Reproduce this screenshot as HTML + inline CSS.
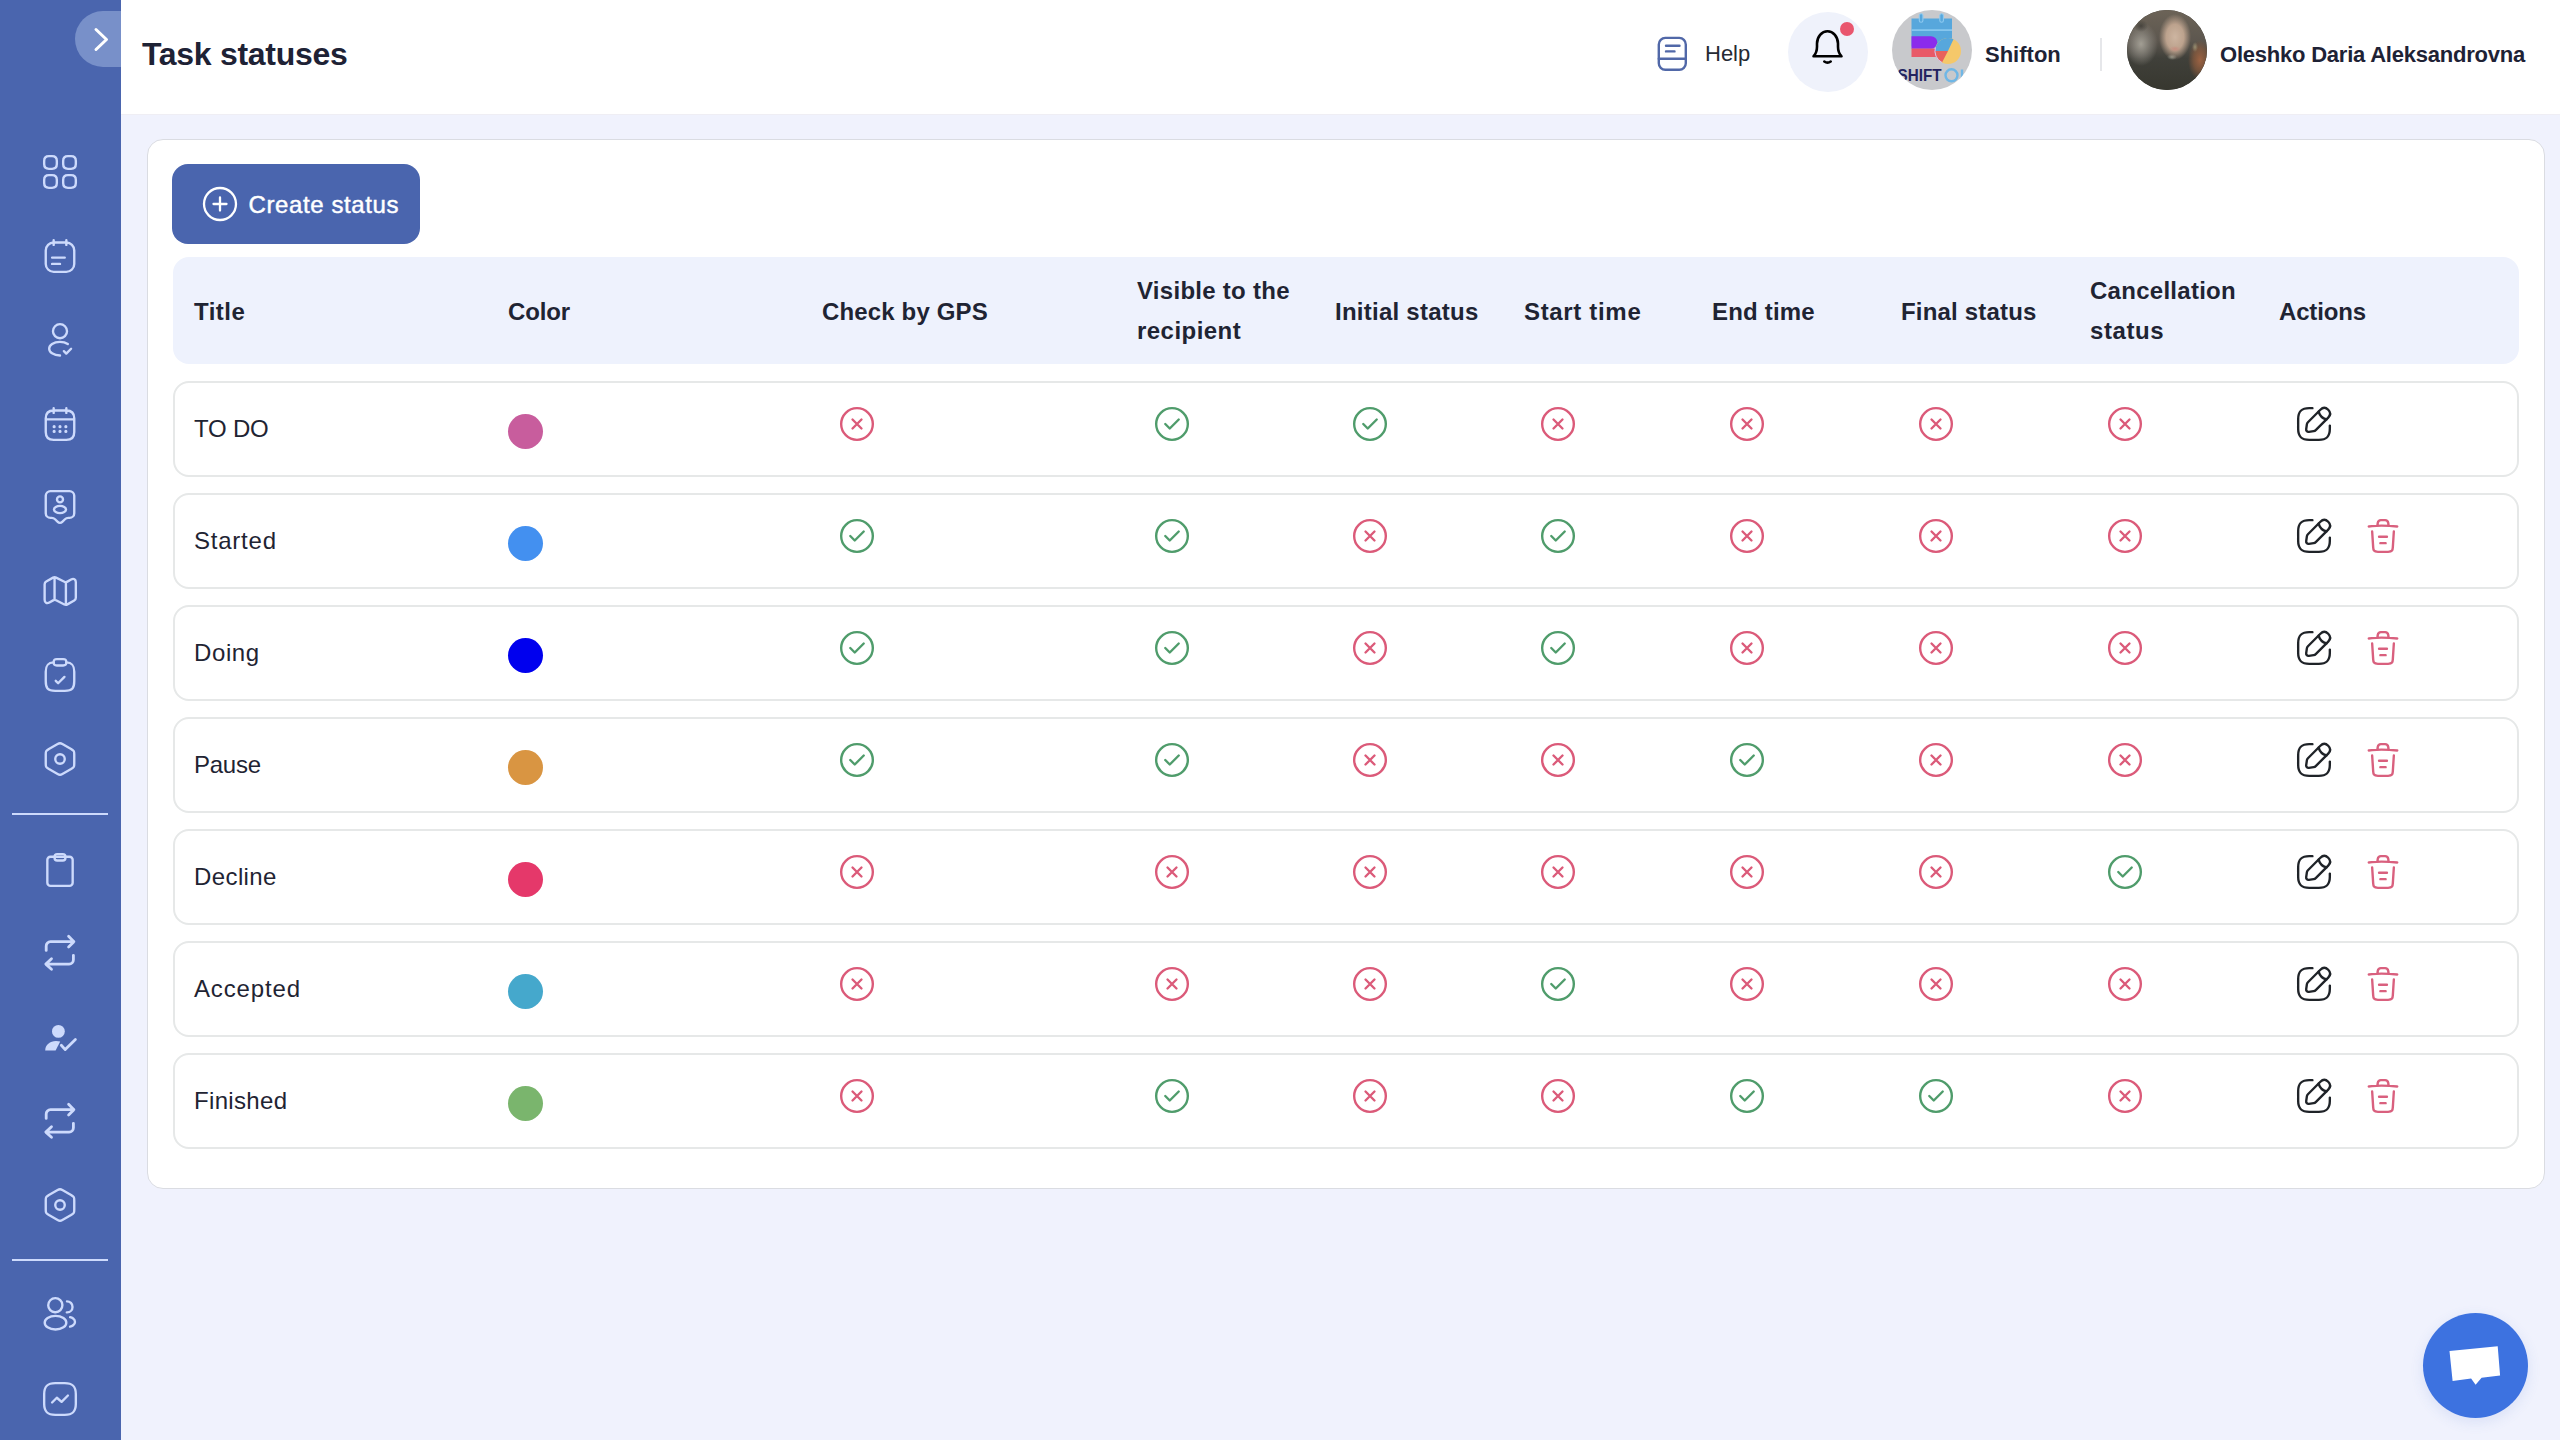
<!DOCTYPE html>
<html><head><meta charset="utf-8"><title>Task statuses</title>
<style>
html,body{margin:0;padding:0;}
body{width:2560px;height:1440px;position:relative;overflow:hidden;background:#f0f2fd;font-family:"Liberation Sans", sans-serif;}
.t{position:absolute;white-space:nowrap;}
.i{position:absolute;overflow:visible;}
</style></head><body>
<div style="position:absolute;left:0;top:0;width:121px;height:1440px;background:#4a65ae"></div>
<div style="position:absolute;left:75px;top:11px;width:46px;height:56px;border-radius:28px 0 0 28px;background:#7890c9"></div>
<svg class="i" style="left:85px;top:21px" width="32" height="36" viewBox="0 0 32 36" fill="none" stroke="#fff" stroke-width="3" stroke-linecap="round" stroke-linejoin="round"><path d="M11 8.5l10.5 10-10.5 10"/></svg>
<svg class="i" style="left:40.50px;top:153.00px;" width="38" height="38" viewBox="0 0 24 24" fill="none" stroke="#cddafc" stroke-width="1.5" stroke-linecap="round" stroke-linejoin="round"><path d="M5 10h2c2 0 3-1 3-3V5c0-2-1-3-3-3H5C3 2 2 3 2 5v2c0 2 1 3 3 3zM17 10h2c2 0 3-1 3-3V5c0-2-1-3-3-3h-2c-2 0-3 1-3 3v2c0 2 1 3 3 3zM17 22h2c2 0 3-1 3-3v-2c0-2-1-3-3-3h-2c-2 0-3 1-3 3v2c0 2 1 3 3 3zM5 22h2c2 0 3-1 3-3v-2c0-2-1-3-3-3H5c-2 0-3 1-3 3v2c0 2 1 3 3 3z"/></svg>
<svg class="i" style="left:40.50px;top:237.00px;" width="38" height="38" viewBox="0 0 24 24" fill="none" stroke="#cddafc" stroke-width="1.5" stroke-linecap="round" stroke-linejoin="round"><path d="M8 2v3M16 2v3M7 13h8M7 17h5"/><rect x="3" y="3.5" width="18" height="18.5" rx="5"/></svg>
<svg class="i" style="left:40.50px;top:320.60px;" width="38" height="38" viewBox="0 0 24 24" fill="none" stroke="#cddafc" stroke-width="1.5" stroke-linecap="round" stroke-linejoin="round"><path d="M14.44 19.05l1.52 1.52 3.04-3.04M12 10.87a4.43 4.43 0 1 0 0-8.87 4.43 4.43 0 0 0 0 8.87zM12 21.81c-1.82 0-3.630-.46-5.01-1.38-2.42-1.62-2.42-4.26 0-5.87 2.73-1.83 7.22-1.83 9.95 0"/></svg>
<svg class="i" style="left:40.50px;top:404.70px;" width="38" height="38" viewBox="0 0 24 24" fill="none" stroke="#cddafc" stroke-width="1.5" stroke-linecap="round" stroke-linejoin="round"><path d="M8 2v3M16 2v3M3.5 9.09h17M21 8.5V17c0 3-1.5 5-5 5H8c-3.5 0-5-2-5-5V8.5c0-3 1.5-5 5-5h8c3.5 0 5 2 5 5z"/><path stroke-width="2" d="M15.695 13.7h.009M15.695 16.7h.009M11.995 13.7h.009M11.995 16.7h.009M8.294 13.7h.01M8.294 16.7h.01"/></svg>
<svg class="i" style="left:40.50px;top:488.30px;" width="38" height="38" viewBox="0 0 24 24" fill="none" stroke="#cddafc" stroke-width="1.5" stroke-linecap="round" stroke-linejoin="round"><path d="M18 18.86h-.76c-.8 0-1.56.31-2.12.87l-1.71 1.69c-.78.77-2.05.77-2.83 0l-1.71-1.69c-.56-.56-1.33-.87-2.12-.87H6c-1.66 0-3-1.33-3-2.97V4.97C3 3.33 4.34 2 6 2h12c1.66 0 3 1.33 3 2.97v10.91c0 1.63-1.34 2.98-3 2.98z"/><circle cx="12" cy="7.2" r="1.9"/><ellipse cx="12" cy="13.6" rx="3.8" ry="2.3"/></svg>
<svg class="i" style="left:40.50px;top:572.40px;" width="38" height="38" viewBox="0 0 24 24" fill="none" stroke="#cddafc" stroke-width="1.5" stroke-linecap="round" stroke-linejoin="round"><path d="M2.29 7.78v9.73c0 1.9 1.35 2.68 2.99 1.74l2.35-1.34c.51-.29 1.36-.32 1.89-.05l5.25 2.63c.53.26 1.38.24 1.89-.05l4.33-2.48c.55-.32 1.01-1.1 1.01-1.74V6.49c0-1.9-1.35-2.68-2.99-1.74l-2.35 1.34c-.51.29-1.36.32-1.89.05L9.52 3.52c-.53-.26-1.38-.24-1.89.05L3.3 6.05c-.56.32-1.01 1.1-1.01 1.73zM8.56 4v13M15.73 6.62V20"/></svg>
<svg class="i" style="left:40.50px;top:656.00px;" width="38" height="38" viewBox="0 0 24 24" fill="none" stroke="#cddafc" stroke-width="1.5" stroke-linecap="round" stroke-linejoin="round"><path d="M9.31 15.7l1.5 1.5 4-4M10 6h4c2 0 2-1 2-2 0-2-1-2-2-2h-4C9 2 8 2 8 4s1 2 2 2z"/><path d="M16 4.02c3.33.18 5 1.41 5 5.98v6c0 4-1 6-6 6H9c-5 0-6-2-6-6v-6c0-4.56 1.67-5.8 5-5.98"/></svg>
<svg class="i" style="left:40.50px;top:740.00px;" width="38" height="38" viewBox="0 0 24 24" fill="none" stroke="#cddafc" stroke-width="1.5" stroke-linecap="round" stroke-linejoin="round"><path d="M3 9.11v5.77C3 17 3 17 5 18.35l5.5 3.18c.83.48 2.18.48 3 0l5.5-3.18c2-1.35 2-1.35 2-3.46V9.11C21 7 21 7 19 5.65l-5.5-3.18c-.82-.48-2.17-.48-3 0L5 5.65C3 7 3 7 3 9.11z"/><path d="M12 15a3 3 0 100-6 3 3 0 000 6z"/></svg>
<svg class="i" style="left:40.50px;top:851.00px;" width="38" height="38" viewBox="0 0 24 24" fill="none" stroke="#cddafc" stroke-width="1.5" stroke-linecap="round" stroke-linejoin="round"><rect x="4" y="3.6" width="16" height="18.4" rx="2"/><rect x="8.6" y="2" width="6.8" height="4" rx="1.6"/></svg>
<svg class="i" style="left:40.50px;top:934.20px;" width="38" height="38" viewBox="0 0 38 38" fill="none" stroke="#cddafc" stroke-width="2.8" stroke-linecap="round" stroke-linejoin="round"><path d="M5.2 16.4V12a4.3 4.3 0 0 1 4.3-4.3H32.9M27.6 2.3l5.3 5.4-5.3 5.3M32.4 21.3v4.5a4.3 4.3 0 0 1-4.3 4.3H4.8M10.5 24.8l-5.7 5.3 5.7 5.2"/></svg>
<svg class="i" style="left:40.50px;top:1019.00px;" width="38" height="38" viewBox="0 0 38 38" fill="none" stroke="#cddafc" stroke-width="2.8" stroke-linecap="round" stroke-linejoin="round"><circle cx="17.4" cy="12.4" r="6.4" fill="#cddafc" stroke="none"/><path d="M4.2 31.4C4.2 26 9 22.1 15 22.1c1.6 0 3 .2 4.2.5L14.6 31.4z" fill="#cddafc" stroke="none"/><path d="M20.3 26.3l3.9 4.3 10.2-10"/></svg>
<svg class="i" style="left:40.50px;top:1102.00px;" width="38" height="38" viewBox="0 0 38 38" fill="none" stroke="#cddafc" stroke-width="2.8" stroke-linecap="round" stroke-linejoin="round"><path d="M5.2 16.4V12a4.3 4.3 0 0 1 4.3-4.3H32.9M27.6 2.3l5.3 5.4-5.3 5.3M32.4 21.3v4.5a4.3 4.3 0 0 1-4.3 4.3H4.8M10.5 24.8l-5.7 5.3 5.7 5.2"/></svg>
<svg class="i" style="left:40.50px;top:1186.00px;" width="38" height="38" viewBox="0 0 24 24" fill="none" stroke="#cddafc" stroke-width="1.5" stroke-linecap="round" stroke-linejoin="round"><path d="M3 9.11v5.77C3 17 3 17 5 18.35l5.5 3.18c.83.48 2.18.48 3 0l5.5-3.18c2-1.35 2-1.35 2-3.46V9.11C21 7 21 7 19 5.65l-5.5-3.18c-.82-.48-2.17-.48-3 0L5 5.65C3 7 3 7 3 9.11z"/><path d="M12 15a3 3 0 100-6 3 3 0 000 6z"/></svg>
<svg class="i" style="left:40.50px;top:1295.40px;" width="38" height="38" viewBox="0 0 24 24" fill="none" stroke="#cddafc" stroke-width="1.5" stroke-linecap="round" stroke-linejoin="round"><path d="M9.16 10.87c-.1-.01-.22-.01-.33 0a4.42 4.42 0 01-4.27-4.43C4.56 3.990 6.54 2 9 2a4.435 4.435 0 01.16 8.87zM16.41 4c1.94 0 3.5 1.57 3.5 3.5 0 1.89-1.5 3.43-3.37 3.5a1.13 1.13 0 00-.26 0M4.16 14.56c-2.42 1.62-2.42 4.26 0 5.87 2.75 1.84 7.26 1.84 10.01 0 2.42-1.62 2.42-4.26 0-5.87-2.74-1.83-7.25-1.83-10.01 0zM18.34 20c.72-.15 1.4-.44 1.96-.87 1.56-1.17 1.56-3.1 0-4.27-.55-.42-1.22-.7-1.930-.86"/></svg>
<svg class="i" style="left:40.50px;top:1379.80px;" width="38" height="38" viewBox="0 0 24 24" fill="none" stroke="#cddafc" stroke-width="1.5" stroke-linecap="round" stroke-linejoin="round"><path d="M9 22h6c5 0 7-2 7-7V9c0-5-2-7-7-7H9C4 2 2 4 2 9v6c0 5 2 7 7 7z"/><path d="M7 14.2l3-3 3 2.6 4-4"/></svg>
<div style="position:absolute;left:12px;top:813px;width:96px;height:2px;background:#cddafc"></div>
<div style="position:absolute;left:12px;top:1259px;width:96px;height:2px;background:#cddafc"></div>
<div style="position:absolute;left:121px;top:0;width:2439px;height:114px;background:#fff;border-bottom:1px solid #efeef4"></div>
<div class="t" style="left:142px;top:32.31px;font-size:32px;line-height:44px;font-weight:bold;color:#1e2235;letter-spacing:-0.3px">Task statuses</div>
<svg class="i" style="left:1654px;top:34px" width="38" height="38" viewBox="0 0 38 38" fill="none" stroke="#5168a8" stroke-width="2.4" stroke-linecap="round" stroke-linejoin="round"><rect x="4.8" y="3.9" width="27" height="31.8" rx="6.5"/><path d="M4.8 24.7h27M12 11.8h13.5M12 17.4h8.5"/></svg>
<div class="t" style="left:1705px;top:39.08px;font-size:22px;line-height:30px;font-weight:normal;color:#262a33;">Help</div>
<div style="position:absolute;left:1788px;top:12px;width:80px;height:80px;border-radius:50%;background:#eff2fb"></div>
<svg class="i" style="left:1808px;top:26px" width="40" height="44" viewBox="0 0 40 44" fill="none" stroke="#000" stroke-width="2.6" stroke-linecap="round" stroke-linejoin="round"><path d="M5.5 30.3c1.5-1.6 3.5-3.6 3.5-9.5v-3.2c0-6.800 4.8-12.4 10.5-12.4s10.5 5.6 10.5 12.4v3.2c0 5.9 2 7.9 3.5 9.5z"/><path d="M16.3 35.5c1.8 1.3 4.600 1.3 6.400 0"/></svg>
<div style="position:absolute;left:1839.7px;top:21.8px;width:14px;height:14px;border-radius:50%;background:#e9566e"></div>
<div style="position:absolute;left:1892px;top:10px;width:80px;height:80px;border-radius:50%;background:#c8c9cc;overflow:hidden">
<svg width="80" height="80" viewBox="0 0 80 80" style="position:absolute;left:0;top:0">
<rect x="19.5" y="8.5" width="40.5" height="28" fill="#57a7dc"/>
<rect x="19.5" y="19.2" width="40.5" height="1.8" fill="#86c6ee"/>
<rect x="27.3" y="3.8" width="3.6" height="8.4" rx="1.8" fill="#57a7dc" stroke="#8fcaf0" stroke-width="1.1"/>
<rect x="47.8" y="3.8" width="3.6" height="8.4" rx="1.8" fill="#57a7dc" stroke="#8fcaf0" stroke-width="1.1"/>
<path d="M19.5 26.2H39a6.3 6.3 0 0 1 0 12.6H19.5Z" fill="#8b2bec"/>
<rect x="19.5" y="38.6" width="28" height="8.4" fill="#e85a68"/>
<circle cx="56" cy="41" r="13" fill="#f5c86a"/>
<path d="M56 41L43 41A13 13 0 0 1 61.5 29.2Z" fill="#57a7dc"/>
<path d="M56 41L43 41A13 13 0 0 0 50 52.5Z" fill="#e8625c"/>
<path d="M43.4 37.5A13 13 0 0 0 50 52.5" fill="none" stroke="#d8c6f2" stroke-width="1"/>
<text x="5.5" y="71.3" font-family="Liberation Sans" font-weight="bold" font-size="16.5" fill="#23235f" textLength="44" lengthAdjust="spacingAndGlyphs">SHIFT</text>
<circle cx="59.5" cy="65.3" r="6" fill="none" stroke="#6fb7e6" stroke-width="2.4"/>
<path d="M70 59.5v12" stroke="#6fb7e6" stroke-width="2.4"/>
</svg></div>
<div class="t" style="left:1985px;top:39.58px;font-size:22px;line-height:30px;font-weight:bold;color:#1e2235;">Shifton</div>
<div style="position:absolute;left:2099.5px;top:37.5px;width:2px;height:33px;background:#e6e7ea"></div>
<div style="position:absolute;left:2127px;top:9.5px;width:80px;height:80px;border-radius:50%;overflow:hidden;background:#3a3a33">
<div style="position:absolute;left:0;top:0;width:80px;height:80px;background:
radial-gradient(ellipse 6px 3px at 48px 39px, #c68e80 0%, rgba(198,142,128,0) 100%),
radial-gradient(ellipse 16px 23px at 48px 27px, #cdb5a1 0%, #bca28d 55%, rgba(140,120,100,0) 100%),
radial-gradient(ellipse 5px 3px at 45px 47px, rgba(190,195,180,0.6) 0%, rgba(200,205,190,0) 100%),
radial-gradient(ellipse 3px 5px at 68px 37px, rgba(190,190,150,0.55) 0%, rgba(200,200,160,0) 100%),
radial-gradient(ellipse 12px 20px at 73px 50px, #9c6242 0%, rgba(150,95,62,0.6) 55%, rgba(0,0,0,0) 100%),
radial-gradient(ellipse 7px 6px at 14px 16px, rgba(53,51,46,0.7) 0%, rgba(50,48,44,0) 100%),
radial-gradient(ellipse 17px 22px at 14px 34px, #a29e94 0%, rgba(140,136,128,0.6) 55%, rgba(0,0,0,0) 100%),
linear-gradient(180deg, #6c6357 0%, #5d574f 38%, #40403a 60%, #37372f 100%)"></div>
</div>
<div class="t" style="left:2220px;top:39.58px;font-size:22px;line-height:30px;font-weight:bold;color:#1e2235;letter-spacing:-0.22px">Oleshko Daria Aleksandrovna</div>
<div style="position:absolute;left:147px;top:139px;width:2396px;height:1048px;background:#fff;border:1px solid #dadce2;border-radius:16px"></div>
<div style="position:absolute;left:172px;top:164px;width:248px;height:80px;border-radius:16px;background:#4a65ae"></div>
<svg class="i" style="left:201px;top:185px" width="38" height="38" viewBox="0 0 38 38" fill="none" stroke="#fff" stroke-width="2.3" stroke-linecap="round"><circle cx="19" cy="19" r="16"/><path d="M19 12.5v13M12.5 19h13"/></svg>
<div class="t" style="left:248.5px;top:185.43px;font-size:24px;line-height:40px;font-weight:normal;color:#fff;letter-spacing:0.6px;-webkit-text-stroke:0.45px #fff">Create status</div>
<div style="position:absolute;left:173px;top:257px;width:2346px;height:107px;border-radius:16px;background:#eef2fd"></div>
<div class="t" style="left:194px;top:291.98px;font-size:24px;line-height:40px;font-weight:bold;color:#1f2433;letter-spacing:0.47px">Title</div>
<div class="t" style="left:508px;top:291.98px;font-size:24px;line-height:40px;font-weight:bold;color:#1f2433;letter-spacing:-0.15px">Color</div>
<div class="t" style="left:822px;top:291.98px;font-size:24px;line-height:40px;font-weight:bold;color:#1f2433;letter-spacing:0.15px">Check by GPS</div>
<div class="t" style="left:1137px;top:271.08px;font-size:24px;line-height:40px;font-weight:bold;color:#1f2433;letter-spacing:0.28px">Visible to the</div>
<div class="t" style="left:1137px;top:311.18px;font-size:24px;line-height:40px;font-weight:bold;color:#1f2433;letter-spacing:0.46px">recipient</div>
<div class="t" style="left:1335px;top:291.98px;font-size:24px;line-height:40px;font-weight:bold;color:#1f2433;letter-spacing:0.25px">Initial status</div>
<div class="t" style="left:1524px;top:291.98px;font-size:24px;line-height:40px;font-weight:bold;color:#1f2433;letter-spacing:0.67px">Start time</div>
<div class="t" style="left:1712px;top:291.98px;font-size:24px;line-height:40px;font-weight:bold;color:#1f2433;letter-spacing:0.19px">End time</div>
<div class="t" style="left:1901px;top:291.98px;font-size:24px;line-height:40px;font-weight:bold;color:#1f2433;letter-spacing:0.18px">Final status</div>
<div class="t" style="left:2090px;top:271.08px;font-size:24px;line-height:40px;font-weight:bold;color:#1f2433;letter-spacing:0.27px">Cancellation</div>
<div class="t" style="left:2090px;top:311.18px;font-size:24px;line-height:40px;font-weight:bold;color:#1f2433;letter-spacing:0.6px">status</div>
<div class="t" style="left:2279px;top:291.98px;font-size:24px;line-height:40px;font-weight:bold;color:#1f2433;letter-spacing:-0.17px">Actions</div>
<div style="position:absolute;left:173px;top:381px;width:2342px;height:92px;border:2px solid #e6e8e8;border-radius:16px;background:#fff"></div>
<div class="t" style="left:194px;top:408.88px;font-size:24px;line-height:40px;font-weight:normal;color:#1f2433;letter-spacing:-0.2px">TO DO</div>
<div style="position:absolute;left:507.5px;top:413.55px;width:35.5px;height:35.5px;border-radius:50%;background:#c85d9d"></div>
<svg class="i" style="left:838.30px;top:405.40px;" width="38" height="38" viewBox="0 0 24 24" fill="none" stroke="#db5a79" stroke-width="1.5" stroke-linecap="round" stroke-linejoin="round"><circle cx="12" cy="12" r="10"/><path d="M9.17 14.83l5.66-5.66M14.83 14.83L9.17 9.17"/></svg>
<svg class="i" style="left:1153.10px;top:405.40px;" width="38" height="38" viewBox="0 0 24 24" fill="none" stroke="#4f9c6b" stroke-width="1.5" stroke-linecap="round" stroke-linejoin="round"><circle cx="12" cy="12" r="10"/><path d="M7.75 12l2.83 2.83 5.67-5.66"/></svg>
<svg class="i" style="left:1350.80px;top:405.40px;" width="38" height="38" viewBox="0 0 24 24" fill="none" stroke="#4f9c6b" stroke-width="1.5" stroke-linecap="round" stroke-linejoin="round"><circle cx="12" cy="12" r="10"/><path d="M7.75 12l2.83 2.83 5.67-5.66"/></svg>
<svg class="i" style="left:1539.40px;top:405.40px;" width="38" height="38" viewBox="0 0 24 24" fill="none" stroke="#db5a79" stroke-width="1.5" stroke-linecap="round" stroke-linejoin="round"><circle cx="12" cy="12" r="10"/><path d="M9.17 14.83l5.66-5.66M14.83 14.83L9.17 9.17"/></svg>
<svg class="i" style="left:1728.00px;top:405.40px;" width="38" height="38" viewBox="0 0 24 24" fill="none" stroke="#db5a79" stroke-width="1.5" stroke-linecap="round" stroke-linejoin="round"><circle cx="12" cy="12" r="10"/><path d="M9.17 14.83l5.66-5.66M14.83 14.83L9.17 9.17"/></svg>
<svg class="i" style="left:1917.00px;top:405.40px;" width="38" height="38" viewBox="0 0 24 24" fill="none" stroke="#db5a79" stroke-width="1.5" stroke-linecap="round" stroke-linejoin="round"><circle cx="12" cy="12" r="10"/><path d="M9.17 14.83l5.66-5.66M14.83 14.83L9.17 9.17"/></svg>
<svg class="i" style="left:2105.50px;top:405.40px;" width="38" height="38" viewBox="0 0 24 24" fill="none" stroke="#db5a79" stroke-width="1.5" stroke-linecap="round" stroke-linejoin="round"><circle cx="12" cy="12" r="10"/><path d="M9.17 14.83l5.66-5.66M14.83 14.83L9.17 9.17"/></svg>
<svg class="i" style="left:2294.60px;top:404.50px;" width="38" height="38" viewBox="0 0 24 24" fill="none" stroke="#1f2328" stroke-width="1.5" stroke-linecap="round" stroke-linejoin="round"><path d="M11 2H9C4 2 2 4 2 9v6c0 5 2 7 7 7h6c5 0 7-2 7-7v-2"/><path d="M16.04 3.02L8.16 10.9c-.3.3-.6.89-.66 1.32l-.43 3.01c-.16 1.09.61 1.85 1.7 1.7l3.01-.43c.42-.06 1.010-.36 1.32-.66l7.88-7.88c1.36-1.36 2-2.94 0-4.94-2-2-3.58-1.36-4.94 0z"/><path d="M14.91 4.15a7.144 7.144 0 004.94 4.94"/></svg>
<div style="position:absolute;left:173px;top:493px;width:2342px;height:92px;border:2px solid #e6e8e8;border-radius:16px;background:#fff"></div>
<div class="t" style="left:194px;top:520.88px;font-size:24px;line-height:40px;font-weight:normal;color:#1f2433;letter-spacing:0.77px">Started</div>
<div style="position:absolute;left:507.5px;top:525.55px;width:35.5px;height:35.5px;border-radius:50%;background:#4390f0"></div>
<svg class="i" style="left:838.30px;top:517.40px;" width="38" height="38" viewBox="0 0 24 24" fill="none" stroke="#4f9c6b" stroke-width="1.5" stroke-linecap="round" stroke-linejoin="round"><circle cx="12" cy="12" r="10"/><path d="M7.75 12l2.83 2.83 5.67-5.66"/></svg>
<svg class="i" style="left:1153.10px;top:517.40px;" width="38" height="38" viewBox="0 0 24 24" fill="none" stroke="#4f9c6b" stroke-width="1.5" stroke-linecap="round" stroke-linejoin="round"><circle cx="12" cy="12" r="10"/><path d="M7.75 12l2.83 2.83 5.67-5.66"/></svg>
<svg class="i" style="left:1350.80px;top:517.40px;" width="38" height="38" viewBox="0 0 24 24" fill="none" stroke="#db5a79" stroke-width="1.5" stroke-linecap="round" stroke-linejoin="round"><circle cx="12" cy="12" r="10"/><path d="M9.17 14.83l5.66-5.66M14.83 14.83L9.17 9.17"/></svg>
<svg class="i" style="left:1539.40px;top:517.40px;" width="38" height="38" viewBox="0 0 24 24" fill="none" stroke="#4f9c6b" stroke-width="1.5" stroke-linecap="round" stroke-linejoin="round"><circle cx="12" cy="12" r="10"/><path d="M7.75 12l2.83 2.83 5.67-5.66"/></svg>
<svg class="i" style="left:1728.00px;top:517.40px;" width="38" height="38" viewBox="0 0 24 24" fill="none" stroke="#db5a79" stroke-width="1.5" stroke-linecap="round" stroke-linejoin="round"><circle cx="12" cy="12" r="10"/><path d="M9.17 14.83l5.66-5.66M14.83 14.83L9.17 9.17"/></svg>
<svg class="i" style="left:1917.00px;top:517.40px;" width="38" height="38" viewBox="0 0 24 24" fill="none" stroke="#db5a79" stroke-width="1.5" stroke-linecap="round" stroke-linejoin="round"><circle cx="12" cy="12" r="10"/><path d="M9.17 14.83l5.66-5.66M14.83 14.83L9.17 9.17"/></svg>
<svg class="i" style="left:2105.50px;top:517.40px;" width="38" height="38" viewBox="0 0 24 24" fill="none" stroke="#db5a79" stroke-width="1.5" stroke-linecap="round" stroke-linejoin="round"><circle cx="12" cy="12" r="10"/><path d="M9.17 14.83l5.66-5.66M14.83 14.83L9.17 9.17"/></svg>
<svg class="i" style="left:2294.60px;top:516.50px;" width="38" height="38" viewBox="0 0 24 24" fill="none" stroke="#1f2328" stroke-width="1.5" stroke-linecap="round" stroke-linejoin="round"><path d="M11 2H9C4 2 2 4 2 9v6c0 5 2 7 7 7h6c5 0 7-2 7-7v-2"/><path d="M16.04 3.02L8.16 10.9c-.3.3-.6.89-.66 1.32l-.43 3.01c-.16 1.09.61 1.85 1.7 1.7l3.01-.43c.42-.06 1.010-.36 1.32-.66l7.88-7.88c1.36-1.36 2-2.94 0-4.94-2-2-3.58-1.36-4.94 0z"/><path d="M14.91 4.15a7.144 7.144 0 004.94 4.94"/></svg>
<svg class="i" style="left:2364.20px;top:516.50px;" width="38" height="38" viewBox="0 0 24 24" fill="none" stroke="#d9607e" stroke-width="1.5" stroke-linecap="round" stroke-linejoin="round"><path d="M21 5.98c-3.33-.33-6.68-.5-10.02-.5-1.98 0-3.960.1-5.94.3L3 5.98M8.5 4.97l.22-1.31C8.88 2.71 9 2 10.69 2h2.62c1.69 0 1.82.75 1.97 1.67l.22 1.3M18.850 9.14l-.65 10.07C18.09 20.78 18 22 15.21 22H8.79C6 22 5.91 20.78 5.8 19.21L5.15 9.14M10.33 16.5h3.33M9.5 12.5h5"/></svg>
<div style="position:absolute;left:173px;top:605px;width:2342px;height:92px;border:2px solid #e6e8e8;border-radius:16px;background:#fff"></div>
<div class="t" style="left:194px;top:632.88px;font-size:24px;line-height:40px;font-weight:normal;color:#1f2433;letter-spacing:0.6px">Doing</div>
<div style="position:absolute;left:507.5px;top:637.55px;width:35.5px;height:35.5px;border-radius:50%;background:#0000ee"></div>
<svg class="i" style="left:838.30px;top:629.40px;" width="38" height="38" viewBox="0 0 24 24" fill="none" stroke="#4f9c6b" stroke-width="1.5" stroke-linecap="round" stroke-linejoin="round"><circle cx="12" cy="12" r="10"/><path d="M7.75 12l2.83 2.83 5.67-5.66"/></svg>
<svg class="i" style="left:1153.10px;top:629.40px;" width="38" height="38" viewBox="0 0 24 24" fill="none" stroke="#4f9c6b" stroke-width="1.5" stroke-linecap="round" stroke-linejoin="round"><circle cx="12" cy="12" r="10"/><path d="M7.75 12l2.83 2.83 5.67-5.66"/></svg>
<svg class="i" style="left:1350.80px;top:629.40px;" width="38" height="38" viewBox="0 0 24 24" fill="none" stroke="#db5a79" stroke-width="1.5" stroke-linecap="round" stroke-linejoin="round"><circle cx="12" cy="12" r="10"/><path d="M9.17 14.83l5.66-5.66M14.83 14.83L9.17 9.17"/></svg>
<svg class="i" style="left:1539.40px;top:629.40px;" width="38" height="38" viewBox="0 0 24 24" fill="none" stroke="#4f9c6b" stroke-width="1.5" stroke-linecap="round" stroke-linejoin="round"><circle cx="12" cy="12" r="10"/><path d="M7.75 12l2.83 2.83 5.67-5.66"/></svg>
<svg class="i" style="left:1728.00px;top:629.40px;" width="38" height="38" viewBox="0 0 24 24" fill="none" stroke="#db5a79" stroke-width="1.5" stroke-linecap="round" stroke-linejoin="round"><circle cx="12" cy="12" r="10"/><path d="M9.17 14.83l5.66-5.66M14.83 14.83L9.17 9.17"/></svg>
<svg class="i" style="left:1917.00px;top:629.40px;" width="38" height="38" viewBox="0 0 24 24" fill="none" stroke="#db5a79" stroke-width="1.5" stroke-linecap="round" stroke-linejoin="round"><circle cx="12" cy="12" r="10"/><path d="M9.17 14.83l5.66-5.66M14.83 14.83L9.17 9.17"/></svg>
<svg class="i" style="left:2105.50px;top:629.40px;" width="38" height="38" viewBox="0 0 24 24" fill="none" stroke="#db5a79" stroke-width="1.5" stroke-linecap="round" stroke-linejoin="round"><circle cx="12" cy="12" r="10"/><path d="M9.17 14.83l5.66-5.66M14.83 14.83L9.17 9.17"/></svg>
<svg class="i" style="left:2294.60px;top:628.50px;" width="38" height="38" viewBox="0 0 24 24" fill="none" stroke="#1f2328" stroke-width="1.5" stroke-linecap="round" stroke-linejoin="round"><path d="M11 2H9C4 2 2 4 2 9v6c0 5 2 7 7 7h6c5 0 7-2 7-7v-2"/><path d="M16.04 3.02L8.16 10.9c-.3.3-.6.89-.66 1.32l-.43 3.01c-.16 1.09.61 1.85 1.7 1.7l3.01-.43c.42-.06 1.010-.36 1.32-.66l7.88-7.88c1.36-1.36 2-2.94 0-4.94-2-2-3.58-1.36-4.94 0z"/><path d="M14.91 4.15a7.144 7.144 0 004.94 4.94"/></svg>
<svg class="i" style="left:2364.20px;top:628.50px;" width="38" height="38" viewBox="0 0 24 24" fill="none" stroke="#d9607e" stroke-width="1.5" stroke-linecap="round" stroke-linejoin="round"><path d="M21 5.98c-3.33-.33-6.68-.5-10.02-.5-1.98 0-3.960.1-5.94.3L3 5.98M8.5 4.97l.22-1.31C8.88 2.71 9 2 10.69 2h2.62c1.69 0 1.82.75 1.97 1.67l.22 1.3M18.850 9.14l-.65 10.07C18.09 20.78 18 22 15.21 22H8.79C6 22 5.91 20.78 5.8 19.21L5.15 9.14M10.33 16.5h3.33M9.5 12.5h5"/></svg>
<div style="position:absolute;left:173px;top:717px;width:2342px;height:92px;border:2px solid #e6e8e8;border-radius:16px;background:#fff"></div>
<div class="t" style="left:194px;top:744.88px;font-size:24px;line-height:40px;font-weight:normal;color:#1f2433;letter-spacing:-0.25px">Pause</div>
<div style="position:absolute;left:507.5px;top:749.55px;width:35.5px;height:35.5px;border-radius:50%;background:#d99542"></div>
<svg class="i" style="left:838.30px;top:741.40px;" width="38" height="38" viewBox="0 0 24 24" fill="none" stroke="#4f9c6b" stroke-width="1.5" stroke-linecap="round" stroke-linejoin="round"><circle cx="12" cy="12" r="10"/><path d="M7.75 12l2.83 2.83 5.67-5.66"/></svg>
<svg class="i" style="left:1153.10px;top:741.40px;" width="38" height="38" viewBox="0 0 24 24" fill="none" stroke="#4f9c6b" stroke-width="1.5" stroke-linecap="round" stroke-linejoin="round"><circle cx="12" cy="12" r="10"/><path d="M7.75 12l2.83 2.83 5.67-5.66"/></svg>
<svg class="i" style="left:1350.80px;top:741.40px;" width="38" height="38" viewBox="0 0 24 24" fill="none" stroke="#db5a79" stroke-width="1.5" stroke-linecap="round" stroke-linejoin="round"><circle cx="12" cy="12" r="10"/><path d="M9.17 14.83l5.66-5.66M14.83 14.83L9.17 9.17"/></svg>
<svg class="i" style="left:1539.40px;top:741.40px;" width="38" height="38" viewBox="0 0 24 24" fill="none" stroke="#db5a79" stroke-width="1.5" stroke-linecap="round" stroke-linejoin="round"><circle cx="12" cy="12" r="10"/><path d="M9.17 14.83l5.66-5.66M14.83 14.83L9.17 9.17"/></svg>
<svg class="i" style="left:1728.00px;top:741.40px;" width="38" height="38" viewBox="0 0 24 24" fill="none" stroke="#4f9c6b" stroke-width="1.5" stroke-linecap="round" stroke-linejoin="round"><circle cx="12" cy="12" r="10"/><path d="M7.75 12l2.83 2.83 5.67-5.66"/></svg>
<svg class="i" style="left:1917.00px;top:741.40px;" width="38" height="38" viewBox="0 0 24 24" fill="none" stroke="#db5a79" stroke-width="1.5" stroke-linecap="round" stroke-linejoin="round"><circle cx="12" cy="12" r="10"/><path d="M9.17 14.83l5.66-5.66M14.83 14.83L9.17 9.17"/></svg>
<svg class="i" style="left:2105.50px;top:741.40px;" width="38" height="38" viewBox="0 0 24 24" fill="none" stroke="#db5a79" stroke-width="1.5" stroke-linecap="round" stroke-linejoin="round"><circle cx="12" cy="12" r="10"/><path d="M9.17 14.83l5.66-5.66M14.83 14.83L9.17 9.17"/></svg>
<svg class="i" style="left:2294.60px;top:740.50px;" width="38" height="38" viewBox="0 0 24 24" fill="none" stroke="#1f2328" stroke-width="1.5" stroke-linecap="round" stroke-linejoin="round"><path d="M11 2H9C4 2 2 4 2 9v6c0 5 2 7 7 7h6c5 0 7-2 7-7v-2"/><path d="M16.04 3.02L8.16 10.9c-.3.3-.6.89-.66 1.32l-.43 3.01c-.16 1.09.61 1.85 1.7 1.7l3.01-.43c.42-.06 1.010-.36 1.32-.66l7.88-7.88c1.36-1.36 2-2.94 0-4.94-2-2-3.58-1.36-4.94 0z"/><path d="M14.91 4.15a7.144 7.144 0 004.94 4.94"/></svg>
<svg class="i" style="left:2364.20px;top:740.50px;" width="38" height="38" viewBox="0 0 24 24" fill="none" stroke="#d9607e" stroke-width="1.5" stroke-linecap="round" stroke-linejoin="round"><path d="M21 5.98c-3.33-.33-6.68-.5-10.02-.5-1.98 0-3.960.1-5.94.3L3 5.98M8.5 4.97l.22-1.31C8.88 2.71 9 2 10.69 2h2.62c1.69 0 1.82.75 1.97 1.67l.22 1.3M18.850 9.14l-.65 10.07C18.09 20.78 18 22 15.21 22H8.79C6 22 5.91 20.78 5.8 19.21L5.15 9.14M10.33 16.5h3.33M9.5 12.5h5"/></svg>
<div style="position:absolute;left:173px;top:829px;width:2342px;height:92px;border:2px solid #e6e8e8;border-radius:16px;background:#fff"></div>
<div class="t" style="left:194px;top:856.88px;font-size:24px;line-height:40px;font-weight:normal;color:#1f2433;letter-spacing:0.4px">Decline</div>
<div style="position:absolute;left:507.5px;top:861.55px;width:35.5px;height:35.5px;border-radius:50%;background:#e5386a"></div>
<svg class="i" style="left:838.30px;top:853.40px;" width="38" height="38" viewBox="0 0 24 24" fill="none" stroke="#db5a79" stroke-width="1.5" stroke-linecap="round" stroke-linejoin="round"><circle cx="12" cy="12" r="10"/><path d="M9.17 14.83l5.66-5.66M14.83 14.83L9.17 9.17"/></svg>
<svg class="i" style="left:1153.10px;top:853.40px;" width="38" height="38" viewBox="0 0 24 24" fill="none" stroke="#db5a79" stroke-width="1.5" stroke-linecap="round" stroke-linejoin="round"><circle cx="12" cy="12" r="10"/><path d="M9.17 14.83l5.66-5.66M14.83 14.83L9.17 9.17"/></svg>
<svg class="i" style="left:1350.80px;top:853.40px;" width="38" height="38" viewBox="0 0 24 24" fill="none" stroke="#db5a79" stroke-width="1.5" stroke-linecap="round" stroke-linejoin="round"><circle cx="12" cy="12" r="10"/><path d="M9.17 14.83l5.66-5.66M14.83 14.83L9.17 9.17"/></svg>
<svg class="i" style="left:1539.40px;top:853.40px;" width="38" height="38" viewBox="0 0 24 24" fill="none" stroke="#db5a79" stroke-width="1.5" stroke-linecap="round" stroke-linejoin="round"><circle cx="12" cy="12" r="10"/><path d="M9.17 14.83l5.66-5.66M14.83 14.83L9.17 9.17"/></svg>
<svg class="i" style="left:1728.00px;top:853.40px;" width="38" height="38" viewBox="0 0 24 24" fill="none" stroke="#db5a79" stroke-width="1.5" stroke-linecap="round" stroke-linejoin="round"><circle cx="12" cy="12" r="10"/><path d="M9.17 14.83l5.66-5.66M14.83 14.83L9.17 9.17"/></svg>
<svg class="i" style="left:1917.00px;top:853.40px;" width="38" height="38" viewBox="0 0 24 24" fill="none" stroke="#db5a79" stroke-width="1.5" stroke-linecap="round" stroke-linejoin="round"><circle cx="12" cy="12" r="10"/><path d="M9.17 14.83l5.66-5.66M14.83 14.83L9.17 9.17"/></svg>
<svg class="i" style="left:2105.50px;top:853.40px;" width="38" height="38" viewBox="0 0 24 24" fill="none" stroke="#4f9c6b" stroke-width="1.5" stroke-linecap="round" stroke-linejoin="round"><circle cx="12" cy="12" r="10"/><path d="M7.75 12l2.83 2.83 5.67-5.66"/></svg>
<svg class="i" style="left:2294.60px;top:852.50px;" width="38" height="38" viewBox="0 0 24 24" fill="none" stroke="#1f2328" stroke-width="1.5" stroke-linecap="round" stroke-linejoin="round"><path d="M11 2H9C4 2 2 4 2 9v6c0 5 2 7 7 7h6c5 0 7-2 7-7v-2"/><path d="M16.04 3.02L8.16 10.9c-.3.3-.6.89-.66 1.32l-.43 3.01c-.16 1.09.61 1.85 1.7 1.7l3.01-.43c.42-.06 1.010-.36 1.32-.66l7.88-7.88c1.36-1.36 2-2.94 0-4.94-2-2-3.58-1.36-4.94 0z"/><path d="M14.91 4.15a7.144 7.144 0 004.94 4.94"/></svg>
<svg class="i" style="left:2364.20px;top:852.50px;" width="38" height="38" viewBox="0 0 24 24" fill="none" stroke="#d9607e" stroke-width="1.5" stroke-linecap="round" stroke-linejoin="round"><path d="M21 5.98c-3.33-.33-6.68-.5-10.02-.5-1.98 0-3.960.1-5.94.3L3 5.98M8.5 4.97l.22-1.31C8.88 2.71 9 2 10.69 2h2.62c1.69 0 1.82.75 1.97 1.67l.22 1.3M18.850 9.14l-.65 10.07C18.09 20.78 18 22 15.21 22H8.79C6 22 5.91 20.78 5.8 19.21L5.15 9.14M10.33 16.5h3.33M9.5 12.5h5"/></svg>
<div style="position:absolute;left:173px;top:941px;width:2342px;height:92px;border:2px solid #e6e8e8;border-radius:16px;background:#fff"></div>
<div class="t" style="left:194px;top:968.88px;font-size:24px;line-height:40px;font-weight:normal;color:#1f2433;letter-spacing:0.86px">Accepted</div>
<div style="position:absolute;left:507.5px;top:973.55px;width:35.5px;height:35.5px;border-radius:50%;background:#45a8cc"></div>
<svg class="i" style="left:838.30px;top:965.40px;" width="38" height="38" viewBox="0 0 24 24" fill="none" stroke="#db5a79" stroke-width="1.5" stroke-linecap="round" stroke-linejoin="round"><circle cx="12" cy="12" r="10"/><path d="M9.17 14.83l5.66-5.66M14.83 14.83L9.17 9.17"/></svg>
<svg class="i" style="left:1153.10px;top:965.40px;" width="38" height="38" viewBox="0 0 24 24" fill="none" stroke="#db5a79" stroke-width="1.5" stroke-linecap="round" stroke-linejoin="round"><circle cx="12" cy="12" r="10"/><path d="M9.17 14.83l5.66-5.66M14.83 14.83L9.17 9.17"/></svg>
<svg class="i" style="left:1350.80px;top:965.40px;" width="38" height="38" viewBox="0 0 24 24" fill="none" stroke="#db5a79" stroke-width="1.5" stroke-linecap="round" stroke-linejoin="round"><circle cx="12" cy="12" r="10"/><path d="M9.17 14.83l5.66-5.66M14.83 14.83L9.17 9.17"/></svg>
<svg class="i" style="left:1539.40px;top:965.40px;" width="38" height="38" viewBox="0 0 24 24" fill="none" stroke="#4f9c6b" stroke-width="1.5" stroke-linecap="round" stroke-linejoin="round"><circle cx="12" cy="12" r="10"/><path d="M7.75 12l2.83 2.83 5.67-5.66"/></svg>
<svg class="i" style="left:1728.00px;top:965.40px;" width="38" height="38" viewBox="0 0 24 24" fill="none" stroke="#db5a79" stroke-width="1.5" stroke-linecap="round" stroke-linejoin="round"><circle cx="12" cy="12" r="10"/><path d="M9.17 14.83l5.66-5.66M14.83 14.83L9.17 9.17"/></svg>
<svg class="i" style="left:1917.00px;top:965.40px;" width="38" height="38" viewBox="0 0 24 24" fill="none" stroke="#db5a79" stroke-width="1.5" stroke-linecap="round" stroke-linejoin="round"><circle cx="12" cy="12" r="10"/><path d="M9.17 14.83l5.66-5.66M14.83 14.83L9.17 9.17"/></svg>
<svg class="i" style="left:2105.50px;top:965.40px;" width="38" height="38" viewBox="0 0 24 24" fill="none" stroke="#db5a79" stroke-width="1.5" stroke-linecap="round" stroke-linejoin="round"><circle cx="12" cy="12" r="10"/><path d="M9.17 14.83l5.66-5.66M14.83 14.83L9.17 9.17"/></svg>
<svg class="i" style="left:2294.60px;top:964.50px;" width="38" height="38" viewBox="0 0 24 24" fill="none" stroke="#1f2328" stroke-width="1.5" stroke-linecap="round" stroke-linejoin="round"><path d="M11 2H9C4 2 2 4 2 9v6c0 5 2 7 7 7h6c5 0 7-2 7-7v-2"/><path d="M16.04 3.02L8.16 10.9c-.3.3-.6.89-.66 1.32l-.43 3.01c-.16 1.09.61 1.85 1.7 1.7l3.01-.43c.42-.06 1.010-.36 1.32-.66l7.88-7.88c1.36-1.36 2-2.94 0-4.94-2-2-3.58-1.36-4.94 0z"/><path d="M14.91 4.15a7.144 7.144 0 004.94 4.94"/></svg>
<svg class="i" style="left:2364.20px;top:964.50px;" width="38" height="38" viewBox="0 0 24 24" fill="none" stroke="#d9607e" stroke-width="1.5" stroke-linecap="round" stroke-linejoin="round"><path d="M21 5.98c-3.33-.33-6.68-.5-10.02-.5-1.98 0-3.960.1-5.94.3L3 5.98M8.5 4.97l.22-1.31C8.88 2.71 9 2 10.69 2h2.62c1.69 0 1.82.75 1.97 1.67l.22 1.3M18.850 9.14l-.65 10.07C18.09 20.78 18 22 15.21 22H8.79C6 22 5.91 20.78 5.8 19.21L5.15 9.14M10.33 16.5h3.33M9.5 12.5h5"/></svg>
<div style="position:absolute;left:173px;top:1053px;width:2342px;height:92px;border:2px solid #e6e8e8;border-radius:16px;background:#fff"></div>
<div class="t" style="left:194px;top:1080.88px;font-size:24px;line-height:40px;font-weight:normal;color:#1f2433;letter-spacing:0.33px">Finished</div>
<div style="position:absolute;left:507.5px;top:1085.55px;width:35.5px;height:35.5px;border-radius:50%;background:#7ab56d"></div>
<svg class="i" style="left:838.30px;top:1077.40px;" width="38" height="38" viewBox="0 0 24 24" fill="none" stroke="#db5a79" stroke-width="1.5" stroke-linecap="round" stroke-linejoin="round"><circle cx="12" cy="12" r="10"/><path d="M9.17 14.83l5.66-5.66M14.83 14.83L9.17 9.17"/></svg>
<svg class="i" style="left:1153.10px;top:1077.40px;" width="38" height="38" viewBox="0 0 24 24" fill="none" stroke="#4f9c6b" stroke-width="1.5" stroke-linecap="round" stroke-linejoin="round"><circle cx="12" cy="12" r="10"/><path d="M7.75 12l2.83 2.83 5.67-5.66"/></svg>
<svg class="i" style="left:1350.80px;top:1077.40px;" width="38" height="38" viewBox="0 0 24 24" fill="none" stroke="#db5a79" stroke-width="1.5" stroke-linecap="round" stroke-linejoin="round"><circle cx="12" cy="12" r="10"/><path d="M9.17 14.83l5.66-5.66M14.83 14.83L9.17 9.17"/></svg>
<svg class="i" style="left:1539.40px;top:1077.40px;" width="38" height="38" viewBox="0 0 24 24" fill="none" stroke="#db5a79" stroke-width="1.5" stroke-linecap="round" stroke-linejoin="round"><circle cx="12" cy="12" r="10"/><path d="M9.17 14.83l5.66-5.66M14.83 14.83L9.17 9.17"/></svg>
<svg class="i" style="left:1728.00px;top:1077.40px;" width="38" height="38" viewBox="0 0 24 24" fill="none" stroke="#4f9c6b" stroke-width="1.5" stroke-linecap="round" stroke-linejoin="round"><circle cx="12" cy="12" r="10"/><path d="M7.75 12l2.83 2.83 5.67-5.66"/></svg>
<svg class="i" style="left:1917.00px;top:1077.40px;" width="38" height="38" viewBox="0 0 24 24" fill="none" stroke="#4f9c6b" stroke-width="1.5" stroke-linecap="round" stroke-linejoin="round"><circle cx="12" cy="12" r="10"/><path d="M7.75 12l2.83 2.83 5.67-5.66"/></svg>
<svg class="i" style="left:2105.50px;top:1077.40px;" width="38" height="38" viewBox="0 0 24 24" fill="none" stroke="#db5a79" stroke-width="1.5" stroke-linecap="round" stroke-linejoin="round"><circle cx="12" cy="12" r="10"/><path d="M9.17 14.83l5.66-5.66M14.83 14.83L9.17 9.17"/></svg>
<svg class="i" style="left:2294.60px;top:1076.50px;" width="38" height="38" viewBox="0 0 24 24" fill="none" stroke="#1f2328" stroke-width="1.5" stroke-linecap="round" stroke-linejoin="round"><path d="M11 2H9C4 2 2 4 2 9v6c0 5 2 7 7 7h6c5 0 7-2 7-7v-2"/><path d="M16.04 3.02L8.16 10.9c-.3.3-.6.89-.66 1.32l-.43 3.01c-.16 1.09.61 1.85 1.7 1.7l3.01-.43c.42-.06 1.010-.36 1.32-.66l7.88-7.88c1.36-1.36 2-2.94 0-4.94-2-2-3.58-1.36-4.94 0z"/><path d="M14.91 4.15a7.144 7.144 0 004.94 4.94"/></svg>
<svg class="i" style="left:2364.20px;top:1076.50px;" width="38" height="38" viewBox="0 0 24 24" fill="none" stroke="#d9607e" stroke-width="1.5" stroke-linecap="round" stroke-linejoin="round"><path d="M21 5.98c-3.33-.33-6.68-.5-10.02-.5-1.98 0-3.960.1-5.94.3L3 5.98M8.5 4.97l.22-1.31C8.88 2.71 9 2 10.69 2h2.62c1.69 0 1.82.75 1.97 1.67l.22 1.3M18.850 9.14l-.65 10.07C18.09 20.78 18 22 15.21 22H8.79C6 22 5.91 20.78 5.8 19.21L5.15 9.14M10.33 16.5h3.33M9.5 12.5h5"/></svg>
<div style="position:absolute;left:2422.5px;top:1313px;width:105px;height:105px;border-radius:50%;background:#3d72e0;box-shadow:0 4px 14px rgba(60,100,200,0.12)"></div>
<svg class="i" style="left:2422.5px;top:1313px" width="105" height="105" viewBox="0 0 105 105"><path d="M26.5 38l48.2-4.8 2.4 29.3-18.5 2.3-6 7-4.5-6.2-18.5 2.4z" fill="#fff"/></svg>
</body></html>
